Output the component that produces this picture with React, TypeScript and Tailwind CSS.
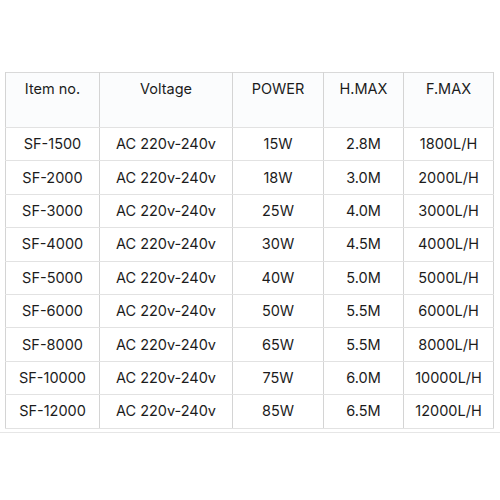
const rows = [
  ["SF-1500", "15W", "2.8M", "1800L/H"],
  ["SF-2000", "18W", "3.0M", "2000L/H"],
  ["SF-3000", "25W", "4.0M", "3000L/H"],
  ["SF-4000", "30W", "4.5M", "4000L/H"],
  ["SF-5000", "40W", "5.0M", "5000L/H"],
  ["SF-6000", "50W", "5.5M", "6000L/H"],
  ["SF-8000", "65W", "5.5M", "8000L/H"],
  ["SF-10000", "75W", "6.0M", "10000L/H"],
  ["SF-12000", "85W", "6.5M", "12000L/H"],
];

const headers = ["Item no.", "Voltage", "POWER", "H.MAX", "F.MAX"];
const widths = ["w-[94px]", "w-[133px]", "w-[91px]", "w-[80px]", "w-[90px]"];

export default function App() {
  return (
    <div className="h-[500px] w-[500px] overflow-hidden bg-white pt-[72px] font-['Inter','Liberation_Sans',sans-serif] text-[14.5px] text-[#1c1c1c]">
      <div className="pl-[5px]">
        <table className="table-fixed border-collapse border border-[#d9d9d9] w-[488px]">
          <colgroup>
            {widths.map((w, i) => (
              <col key={i} className={w} />
            ))}
          </colgroup>
          <thead>
            <tr className="h-[55px] bg-[#fbfcfd]">
              {headers.map((h) => (
                <th
                  key={h}
                  className="border-x border-b border-[#d4d4d4] border-b-[#e2e2e2] pb-[23px] text-center align-middle font-normal"
                >
                  {h}
                </th>
              ))}
            </tr>
          </thead>
          <tbody>
            {rows.map((r) => (
              <tr key={r[0]} className="h-[33.4px]">
                <td className="border-x border-b border-[#d4d4d4] border-b-[#e2e2e2] text-center">{r[0]}</td>
                <td className="border-x border-b border-[#d4d4d4] border-b-[#e2e2e2] text-center">AC 220v-240v</td>
                <td className="border-x border-b border-[#d4d4d4] border-b-[#e2e2e2] text-center">{r[1]}</td>
                <td className="border-x border-b border-[#d4d4d4] border-b-[#e2e2e2] text-center">{r[2]}</td>
                <td className="border-x border-b border-[#d4d4d4] border-b-[#e2e2e2] text-center">{r[3]}</td>
              </tr>
            ))}
          </tbody>
        </table>
      </div>
      <div className="mt-[3px] h-px bg-[#e6e6e6]" />
    </div>
  );
}
